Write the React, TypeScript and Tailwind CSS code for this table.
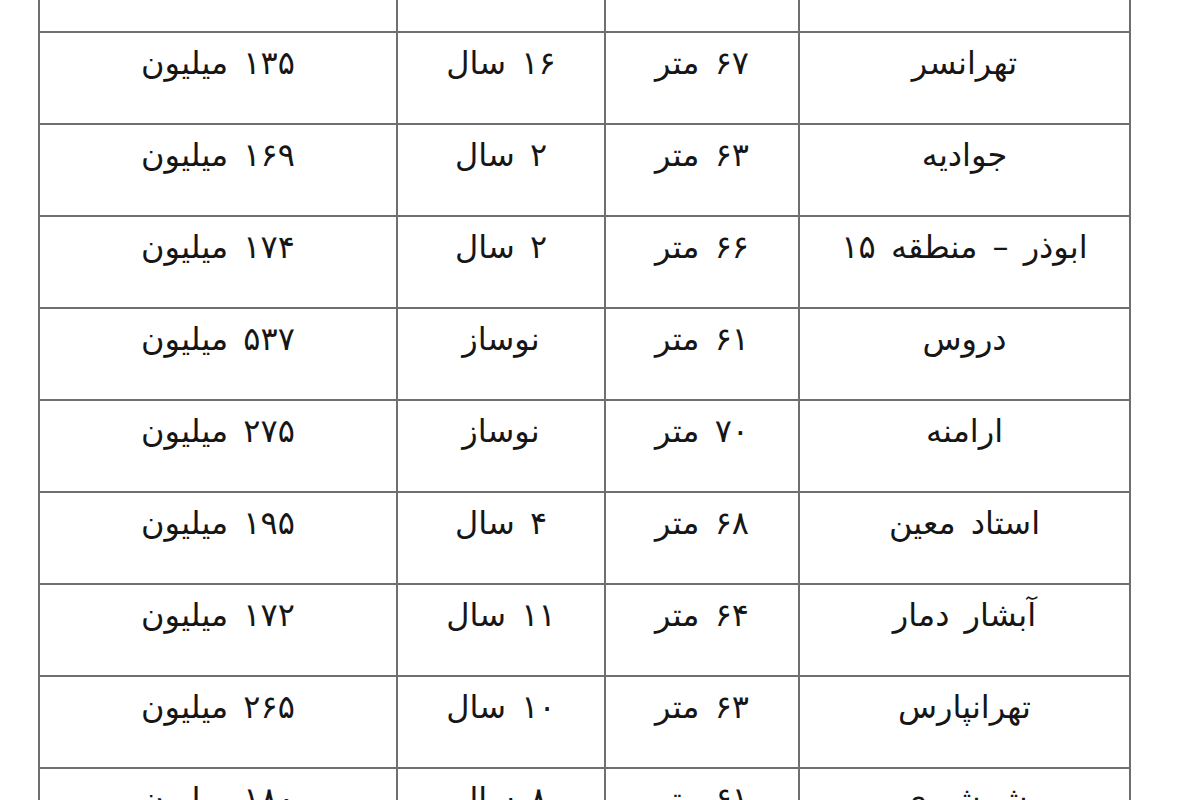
const rows: string[][] = [
  ["", "", "", ""],
  ["تهرانسر", "۶۷ متر", "۱۶ سال", "۱۳۵ میلیون"],
  ["جوادیه", "۶۳ متر", "۲ سال", "۱۶۹ میلیون"],
  ["ابوذر – منطقه ۱۵", "۶۶ متر", "۲ سال", "۱۷۴ میلیون"],
  ["دروس", "۶۱ متر", "نوساز", "۵۳۷ میلیون"],
  ["ارامنه", "۷۰ متر", "نوساز", "۲۷۵ میلیون"],
  ["استاد معین", "۶۸ متر", "۴ سال", "۱۹۵ میلیون"],
  ["آبشار دمار", "۶۴ متر", "۱۱ سال", "۱۷۲ میلیون"],
  ["تهرانپارس", "۶۳ متر", "۱۰ سال", "۲۶۵ میلیون"],
  ["شمشیری", "۶۱ متر", "۸ سال", "۱۸۰ میلیون"],
];

export default function App() {
  return (
    <div className="h-[800px] w-[1200px] overflow-hidden bg-white pl-[38px]">
      <table
        dir="rtl"
        className="-mt-[61px] w-[1091px] table-fixed border-collapse text-[#161616]"
        style={{ fontFamily: '"DejaVu Sans", sans-serif' }}
      >
        <colgroup>
          <col className="w-[331px]" />
          <col className="w-[194px]" />
          <col className="w-[208px]" />
          <col className="w-[358px]" />
        </colgroup>
        <tbody>
          {rows.map((row, i) => (
            <tr key={i} className="h-[92px]">
              {row.map((cell, j) => (
                <td
                  key={j}
                  className="border-2 border-[#6f6f6f] pt-[7px] text-center align-top text-[32px] leading-[46px] [word-spacing:5px]"
                >
                  {cell}
                </td>
              ))}
            </tr>
          ))}
        </tbody>
      </table>
    </div>
  );
}
